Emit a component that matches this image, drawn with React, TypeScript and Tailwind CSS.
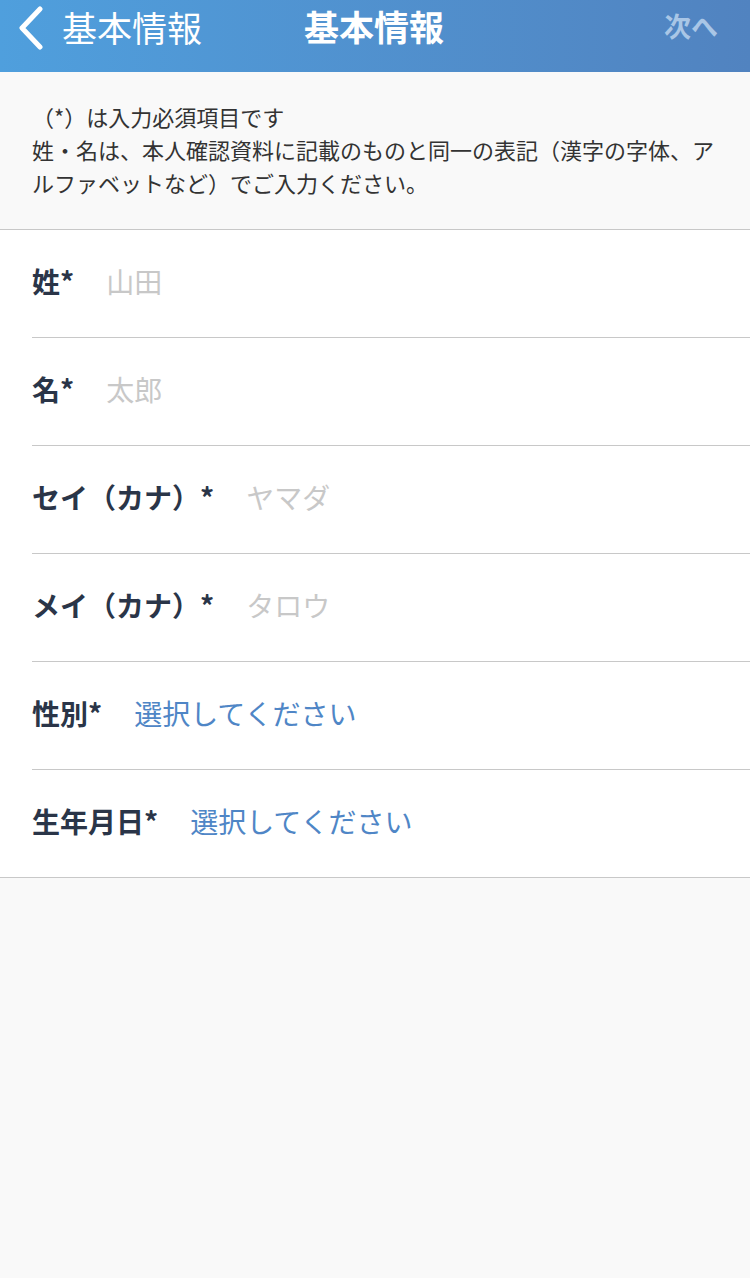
import React from 'react';

interface Field {
  label: string;
  value: string;
  kind: 'input' | 'select';
}

const fields: Field[] = [
  { label: '姓*', value: '山田', kind: 'input' },
  { label: '名*', value: '太郎', kind: 'input' },
  { label: 'セイ（カナ）*', value: 'ヤマダ', kind: 'input' },
  { label: 'メイ（カナ）*', value: 'タロウ', kind: 'input' },
  { label: '性別*', value: '選択してください', kind: 'select' },
  { label: '生年月日*', value: '選択してください', kind: 'select' },
];

const font = { fontFamily: '"Noto Sans CJK JP", "Noto Sans", sans-serif' };

export default function App() {
  return (
    <div className="min-h-[1278px] w-[750px] bg-[#f9f9f9]" style={font}>
      <header className="flex h-[72px] items-start bg-gradient-to-r from-[#4f9fdd] to-[#5183c0] pt-[3px]">
        <div className="flex w-[250px] items-center">
          <svg width="44" height="46" viewBox="0 0 44 46" className="ml-[10px] mt-[1px]">
            <path d="M30 5 L12 24 L30 43" fill="none" stroke="#fff" strokeWidth="5" strokeLinecap="round" strokeLinejoin="round" />
          </svg>
          <span className="ml-[8px] text-[35px] leading-[46px] text-white">基本情報</span>
        </div>
        <div className="flex-1 -ml-[2px] text-center text-[35px] font-bold leading-[46px] text-white">基本情報</div>
        <div className="w-[250px] pr-[32px] text-right text-[27px] font-bold leading-[46px] text-[#a9c6e6]">次へ</div>
      </header>

      <section className="border-b border-[#c8c8c8] px-[32px] pt-[28px] pb-[30px] text-[22px] leading-[33px] text-[#333]">
        <p>（*）は入力必須項目です</p>
        <p>姓・名は、本人確認資料に記載のものと同一の表記（漢字の字体、アルファベットなど）でご入力ください。</p>
      </section>

      <div className="border-b border-[#c8c8c8] bg-white">
        {fields.map((f, i) => (
          <div key={f.label} className="pl-[32px]">
            <div className={`flex items-center pb-[6px] ${i < fields.length - 1 ? 'h-[108px] border-b border-[#c8c8c8]' : 'h-[107px]'}`}>
              <span className="mr-[32px] text-[28px] font-bold text-[#2a3548]">{f.label}</span>
              <span className={`text-[28px] ${f.kind === 'select' ? 'text-[#4f86c6]' : 'text-[#c8c8c8]'}`}>{f.value}</span>
            </div>
          </div>
        ))}
      </div>
    </div>
  );
}
